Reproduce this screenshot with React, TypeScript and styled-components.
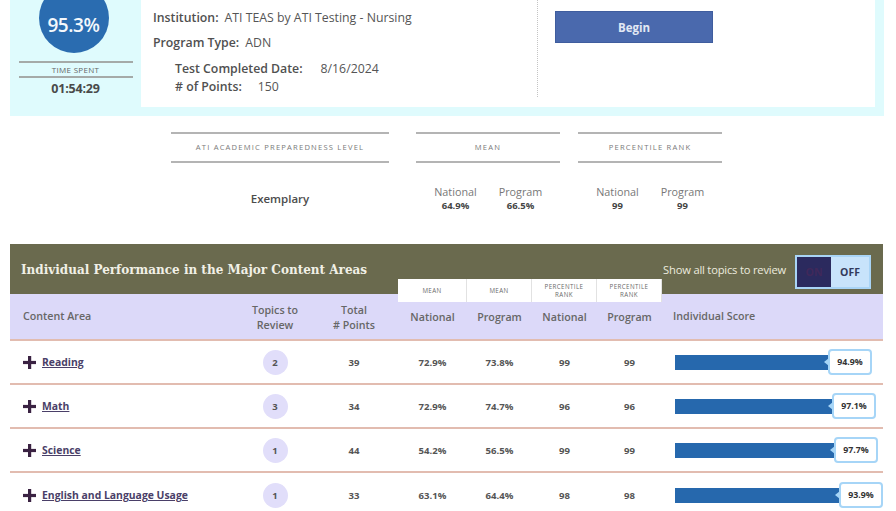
import React from "react";
import styled, { createGlobalStyle } from "styled-components";

const Global = createGlobalStyle`
  html, body { margin: 0; padding: 0; background: #ffffff; }
  body { font-family: "Open Sans", "Liberation Sans", sans-serif; color: #555; overflow: hidden; }
  * { box-sizing: border-box; }
`;

const Page = styled.div`
  width: 896px;
  height: 511px;
  overflow: hidden;
`;

/* ---------- top panel ---------- */
const TopPanel = styled.div`
  margin-left: 10px;
  width: 874px;
  height: 116px;
  background: #dffbfd;
  display: flex;
  padding: 0 9px 9px 0;
`;

const ScoreCol = styled.div`
  width: 131px;
  display: flex;
  flex-direction: column;
  align-items: center;
`;

const Circle = styled.div`
  width: 70px;
  height: 70px;
  margin-top: -17px;
  margin-right: 4px;
  border-radius: 50%;
  background: #2a6cb0;
  color: #f4f8fc;
  font-size: 19px;
  font-weight: 600;
  display: flex;
  align-items: center;
  justify-content: center;
  padding-top: 14px;
  letter-spacing: -0.4px;
`;

const TimeLabel = styled.div`
  margin-top: 8px;
  width: 114px;
  border-top: 2px solid #a5aaa8;
  border-bottom: 2px solid #a5aaa8;
  height: 17px;
  font-size: 8px;
  color: #666;
  text-align: center;
  line-height: 13px;
  letter-spacing: 0.3px;
`;

const TimeValue = styled.div`
  font-size: 12.5px;
  font-weight: 700;
  color: #4a4a4a;
  margin-top: 2px;
  letter-spacing: -0.2px;
`;

const InfoCard = styled.div`
  flex: 1;
  background: #ffffff;
  display: flex;
`;

const InfoText = styled.div`
  width: 396px;
  padding: 10px 0 0 12px;
  font-size: 12.3px;
  color: #555;
`;

const InfoLine = styled.div<{ $indent?: number; $mt?: number }>`
  margin-left: ${(p) => p.$indent ?? 0}px;
  margin-top: ${(p) => p.$mt ?? 0}px;
  white-space: nowrap;
  line-height: 16px;
  b { font-weight: 600; color: #505050; margin-right: 6px; }
`;

const Gap = styled.span<{ $w: number }>`
  display: inline-block;
  width: ${(p) => p.$w}px;
`;

const DottedDivider = styled.div`
  width: 0;
  height: 97px;
  border-left: 1px dotted #c4c4c4;
`;

const ActionCol = styled.div`
  padding: 11px 0 0 17px;
`;

const BeginButton = styled.button`
  width: 158px;
  height: 32px;
  background: #4a69ad;
  border: 1px solid #3f5d9e;
  color: #e2e8f4;
  font-family: "Open Sans", sans-serif;
  font-weight: 700;
  font-size: 11.5px;
  padding: 0;
`;

/* ---------- summary ---------- */
const Summary = styled.div`
  display: flex;
  padding-top: 16px;
  height: 128px;
`;

const Group = styled.div<{ $w: number; $ml: number }>`
  width: ${(p) => p.$w}px;
  margin-left: ${(p) => p.$ml}px;
`;

const GroupHead = styled.div`
  height: 31px;
  border-top: 2px solid #b4b4b4;
  border-bottom: 2px solid #b4b4b4;
  font-size: 7.6px;
  color: #7a7a7a;
  text-transform: uppercase;
  text-align: center;
  line-height: 27px;
  letter-spacing: 1.2px;
  white-space: nowrap;
`;

const GroupBody = styled.div`
  display: flex;
  justify-content: center;
  padding-top: 22px;
`;

const Level = styled.div`
  font-size: 11.5px;
  font-weight: 600;
  color: #4c4c4c;
  padding-top: 6px;
`;

const Stat = styled.div`
  width: 65px;
  text-align: center;
`;

const StatLabel = styled.div`
  font-size: 10.8px;
  color: #777;
  line-height: 13px;
`;

const StatValue = styled.div`
  font-size: 9.5px;
  font-weight: 700;
  color: #454545;
  line-height: 16px;
`;

/* ---------- table ---------- */
const Table = styled.div`
  margin-left: 10px;
  width: 873px;
`;

const TableHeader = styled.div`
  position: relative;
  height: 50px;
  background: #6a6a4e;
  display: flex;
  align-items: center;
  padding: 0 12px 0 11px;
`;

const Title = styled.div`
  font-family: "DejaVu Serif", "Liberation Serif", serif;
  font-weight: 700;
  font-size: 12px;
  color: #f1f0e6;
  flex: 1;
  padding-top: 2px;
`;

const ShowAll = styled.div`
  font-size: 11.2px;
  color: #ecebdf;
  margin-right: 9px;
  letter-spacing: -0.2px;
`;

const Toggle = styled.div`
  width: 76px;
  height: 34px;
  margin-top: 5px;
  border: 2px solid #a9d4f6;
  display: flex;
`;

const ToggleSide = styled.div<{ $on?: boolean }>`
  width: ${(p) => (p.$on ? 34 : 38)}px;
  background: ${(p) => (p.$on ? "#2b2a5e" : "#c8e3fb")};
  color: ${(p) => (p.$on ? "#40285a" : "#333a5c")};
  font-size: 10.5px;
  font-weight: 700;
  display: flex;
  align-items: center;
  justify-content: center;
`;

const Tabs = styled.div`
  position: absolute;
  left: 388px;
  top: 35px;
  height: 23px;
  display: flex;
  z-index: 2;
`;

const Tab = styled.div<{ $w: number }>`
  width: ${(p) => p.$w}px;
  background: #ffffff;
  border-right: 1px solid #e2e2e2;
  font-size: 6.2px;
  color: #6a6a6a;
  text-transform: uppercase;
  text-align: center;
  line-height: 8px;
  display: flex;
  align-items: center;
  justify-content: center;
  letter-spacing: 0.4px;
`;

const cols = "230px 70px 88px 69px 65px 65px 65px 221px";

const HeadRow = styled.div`
  display: grid;
  grid-template-columns: ${cols};
  height: 47px;
  background: #dcd9f9;
  border-bottom: 2px solid #e2bcb0;
  align-items: center;
  font-size: 10.7px;
  font-weight: 600;
  color: #676767;
`;

const HeadCell = styled.div<{ $left?: boolean; $pad?: number }>`
  text-align: ${(p) => (p.$left ? "left" : "center")};
  padding-left: ${(p) => p.$pad ?? 0}px;
  line-height: 15px;
  padding-top: ${(p) => (p.$left ? 0 : 2)}px;
  white-space: nowrap;
`;

const Row = styled.div<{ $last?: boolean }>`
  display: grid;
  grid-template-columns: ${cols};
  height: 44px;
  align-items: center;
  border-bottom: ${(p) => (p.$last ? "none" : "2px solid #e2bcb0")};
  font-size: 9.6px;
  font-weight: 700;
  color: #555;
`;

const Cell = styled.div`
  text-align: center;
`;

const AreaCell = styled.div`
  display: flex;
  align-items: center;
  padding-left: 13px;
`;

const AreaLink = styled.a`
  margin-left: 6px;
  font-size: 10.4px;
  font-weight: 700;
  color: #4a3f68;
  text-decoration: underline;
`;

const Badge = styled.div`
  width: 25px;
  height: 25px;
  border-radius: 50%;
  background: #e1defa;
  margin: 0 auto;
  display: flex;
  align-items: center;
  justify-content: center;
  font-size: 9.5px;
  color: #555;
`;

const ScoreCell = styled.div`
  display: flex;
  align-items: center;
  padding-left: 13px;
`;

const Bar = styled.div`
  height: 15px;
  background: #2668ad;
`;

const ScoreBox = styled.div`
  position: relative;
  width: 44px;
  height: 26px;
  border: 2px solid #a6d5f7;
  border-radius: 4px;
  background: #ffffff;
  display: flex;
  align-items: center;
  justify-content: center;
  font-size: 8.8px;
  font-weight: 700;
  color: #333;
  &::before {
    content: "";
    position: absolute;
    left: -6px;
    top: 7px;
    border-top: 4px solid transparent;
    border-bottom: 4px solid transparent;
    border-right: 5px solid #a6d5f7;
  }
`;

const Plus = () => (
  <svg width="13" height="13" viewBox="0 0 13 13">
    <rect x="5" y="0" width="3.2" height="13" fill="#3a2242" />
    <rect x="0" y="4.9" width="13" height="3.2" fill="#3a2242" />
  </svg>
);

const rows = [
  { name: "Reading", topics: 2, total: 39, nat: "72.9%", prog: "73.8%", pn: 99, pp: 99, score: "94.9%", bar: 153 },
  { name: "Math", topics: 3, total: 34, nat: "72.9%", prog: "74.7%", pn: 96, pp: 96, score: "97.1%", bar: 157 },
  { name: "Science", topics: 1, total: 44, nat: "54.2%", prog: "56.5%", pn: 99, pp: 99, score: "97.7%", bar: 159 },
  { name: "English and Language Usage", topics: 1, total: 33, nat: "63.1%", prog: "64.4%", pn: 98, pp: 98, score: "93.9%", bar: 164 },
];

export default function App() {
  return (
    <Page>
      <Global />
      <TopPanel>
        <ScoreCol>
          <Circle>95.3%</Circle>
          <TimeLabel>TIME SPENT</TimeLabel>
          <TimeValue>01:54:29</TimeValue>
        </ScoreCol>
        <InfoCard>
          <InfoText>
            <InfoLine>
              <b>Institution:</b>ATI TEAS by ATI Testing - Nursing
            </InfoLine>
            <InfoLine $mt={9}>
              <b>Program Type:</b>ADN
            </InfoLine>
            <InfoLine $indent={22} $mt={10}>
              <b>Test Completed Date:</b>
              <Gap $w={12} />
              8/16/2024
            </InfoLine>
            <InfoLine $indent={22} $mt={2}>
              <b># of Points:</b>
              <Gap $w={10} />
              150
            </InfoLine>
          </InfoText>
          <DottedDivider />
          <ActionCol>
            <BeginButton>Begin</BeginButton>
          </ActionCol>
        </InfoCard>
      </TopPanel>

      <Summary>
        <Group $w={218} $ml={171}>
          <GroupHead>ATI Academic Preparedness Level</GroupHead>
          <GroupBody>
            <Level>Exemplary</Level>
          </GroupBody>
        </Group>
        <Group $w={144} $ml={27}>
          <GroupHead>Mean</GroupHead>
          <GroupBody>
            <Stat>
              <StatLabel>National</StatLabel>
              <StatValue>64.9%</StatValue>
            </Stat>
            <Stat>
              <StatLabel>Program</StatLabel>
              <StatValue>66.5%</StatValue>
            </Stat>
          </GroupBody>
        </Group>
        <Group $w={144} $ml={18}>
          <GroupHead>Percentile Rank</GroupHead>
          <GroupBody>
            <Stat>
              <StatLabel>National</StatLabel>
              <StatValue>99</StatValue>
            </Stat>
            <Stat>
              <StatLabel>Program</StatLabel>
              <StatValue>99</StatValue>
            </Stat>
          </GroupBody>
        </Group>
      </Summary>

      <Table>
        <TableHeader>
          <Title>Individual Performance in the Major Content Areas</Title>
          <ShowAll>Show all topics to review</ShowAll>
          <Toggle>
            <ToggleSide $on>ON</ToggleSide>
            <ToggleSide>OFF</ToggleSide>
          </Toggle>
          <Tabs>
            <Tab $w={69}>Mean</Tab>
            <Tab $w={65}>Mean</Tab>
            <Tab $w={65}>Percentile<br />Rank</Tab>
            <Tab $w={65}>Percentile<br />Rank</Tab>
          </Tabs>
        </TableHeader>
        <HeadRow>
          <HeadCell $left $pad={13}>Content Area</HeadCell>
          <HeadCell>Topics to<br />Review</HeadCell>
          <HeadCell>Total<br /># Points</HeadCell>
          <HeadCell>National</HeadCell>
          <HeadCell>Program</HeadCell>
          <HeadCell>National</HeadCell>
          <HeadCell>Program</HeadCell>
          <HeadCell $left $pad={11}>Individual Score</HeadCell>
        </HeadRow>
        {rows.map((r, i) => (
          <Row key={r.name} $last={i === rows.length - 1}>
            <AreaCell>
              <Plus />
              <AreaLink>{r.name}</AreaLink>
            </AreaCell>
            <Cell>
              <Badge>{r.topics}</Badge>
            </Cell>
            <Cell>{r.total}</Cell>
            <Cell>{r.nat}</Cell>
            <Cell>{r.prog}</Cell>
            <Cell>{r.pn}</Cell>
            <Cell>{r.pp}</Cell>
            <ScoreCell>
              <Bar style={{ width: r.bar }} />
              <ScoreBox>{r.score}</ScoreBox>
            </ScoreCell>
          </Row>
        ))}
      </Table>
    </Page>
  );
}
